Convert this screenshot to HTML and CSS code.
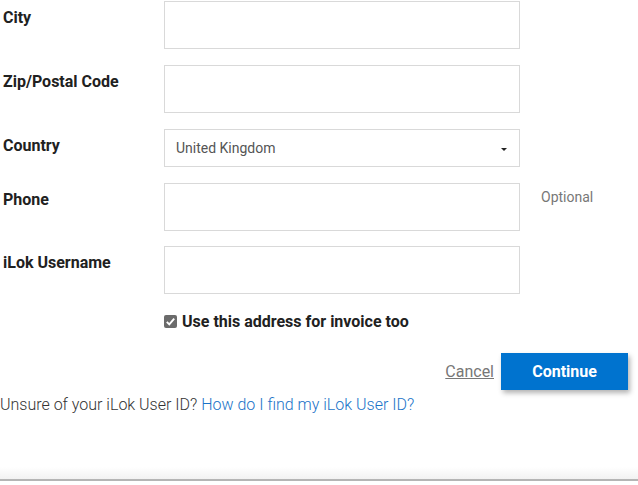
FILE: index.html
```html
<!DOCTYPE html>
<html>
<head>
<meta charset="utf-8">
<link rel="stylesheet" href="styles.css">
</head>
<body>
<form class="form">
  <div class="row">
    <label class="label">City</label>
    <div class="field"><input class="input" type="text"></div>
    <div class="note"></div>
  </div>
  <div class="row">
    <label class="label">Zip/Postal Code</label>
    <div class="field"><input class="input" type="text"></div>
    <div class="note"></div>
  </div>
  <div class="row">
    <label class="label">Country</label>
    <div class="field">
      <div class="select">
        <span class="select-value">United Kingdom</span>
        <span class="caret"></span>
      </div>
    </div>
    <div class="note"></div>
  </div>
  <div class="row row-tight">
    <label class="label">Phone</label>
    <div class="field"><input class="input" type="text"></div>
    <div class="note">Optional</div>
  </div>
  <div class="row">
    <label class="label">iLok Username</label>
    <div class="field"><input class="input" type="text"></div>
    <div class="note"></div>
  </div>
  <div class="check-row">
    <span class="checkbox">
      <svg width="13" height="13" viewBox="0 0 13 13"><rect x="0" y="0" width="13" height="13" rx="2" fill="#6b6b6b"/><path d="M2.8 6.8 L5.3 9.3 L10.2 3.6" fill="none" stroke="#fff" stroke-width="1.9"/></svg>
    </span>
    <span class="check-label">Use this address for invoice too</span>
  </div>
  <div class="actions">
    <a class="cancel" href="#">Cancel</a>
    <button class="continue" type="button">Continue</button>
  </div>
  <p class="help">Unsure of your iLok User ID? <a class="help-link" href="#">How do I find my iLok User ID?</a></p>
</form>
<div class="footer-shade"></div>
<div class="footer-line"></div>
</body>
</html>
```
FILE: styles.css
```css
html, body {
  margin: 0;
  padding: 0;
  background: #fff;
}
body {
  font-family: Roboto, "Liberation Sans", sans-serif;
  color: #212121;
  width: 638px;
  height: 485px;
  overflow: hidden;
}
.form {
  padding-top: 1px;
}
.row {
  display: grid;
  grid-template-columns: 164px 356px 1fr;
  margin-bottom: 16px;
}
.row-tight {
  margin-bottom: 15px;
}
.label {
  font-weight: 700;
  font-size: 16px;
  line-height: 20px;
  padding-top: 7px;
  padding-left: 3px;
  color: #212121;
}
.input {
  box-sizing: border-box;
  display: block;
  width: 356px;
  height: 48px;
  border: 1px solid #d9d9d9;
  margin: 0;
  padding: 0 10px;
  background: #fff;
  font-family: inherit;
}
.select {
  box-sizing: border-box;
  width: 356px;
  height: 38px;
  border: 1px solid #d9d9d9;
  display: flex;
  align-items: center;
  justify-content: space-between;
  padding: 0 12px 0 11px;
}
.select-value {
  font-size: 14px;
  color: #555;
  margin-top: -1px;
}
.caret {
  width: 0;
  height: 0;
  border-left: 3px solid transparent;
  border-right: 3px solid transparent;
  border-top: 3px solid #222;
  margin-top: 2px;
}
.note {
  font-size: 14px;
  color: #777;
  padding-left: 21px;
  padding-top: 6px;
  line-height: 16px;
}
.check-row {
  display: flex;
  align-items: center;
  padding-left: 164px;
  margin-top: 1px;
  height: 22px;
}
.checkbox {
  display: inline-flex;
  width: 13px;
  height: 13px;
  margin-right: 5px;
}
.check-label {
  font-weight: 700;
  font-size: 16px;
  color: #212121;
}
.actions {
  display: flex;
  justify-content: flex-end;
  align-items: center;
  gap: 7px;
  padding-right: 10px;
  margin-top: 21px;
}
.cancel {
  font-size: 16px;
  color: #777;
  text-decoration: underline;
}
.continue {
  width: 127px;
  height: 37px;
  border: 0;
  background: #0073cf;
  color: #fff;
  font-family: inherit;
  font-weight: 700;
  font-size: 16px;
  box-shadow: 2px 3px 5px rgba(0, 0, 0, 0.3);
  padding: 0;
}
.help {
  margin: 5px 0 0 0;
  font-size: 16px;
  font-weight: 300;
  color: #333;
  line-height: 20px;
}
.help-link {
  color: #1a73c8;
  text-decoration: none;
}
.footer-shade {
  margin-top: 52px;
  height: 12px;
  background: linear-gradient(#fff, #f2f2f2);
}
.footer-line {
  height: 2px;
  background: #b5b5b5;
}
```
